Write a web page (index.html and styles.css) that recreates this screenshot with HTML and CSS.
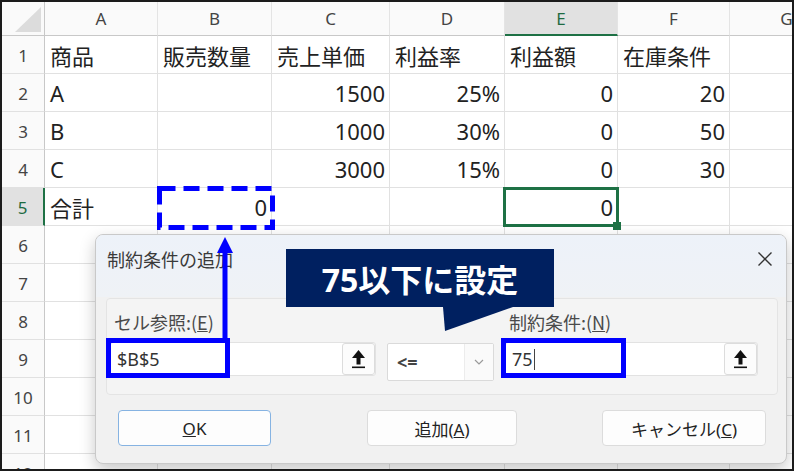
FILE: index.html
```html
<!DOCTYPE html>
<html lang="ja">
<head>
<meta charset="UTF-8">
<meta name="viewport" content="width=device-width, initial-scale=1.0">
<title>制約条件の追加</title>
<link rel="stylesheet" href="styles.css">
</head>
<body>
<div class="screen">

  <!-- worksheet -->
  <div class="sheet">
    <div class="row hd">
      <div class="corner"></div>
      <div class="col-hd">A</div>
      <div class="col-hd">B</div>
      <div class="col-hd">C</div>
      <div class="col-hd">D</div>
      <div class="col-hd on">E</div>
      <div class="col-hd">F</div>
      <div class="col-hd">G</div>
    </div>
    <div class="row">
      <div class="row-hd">1</div>
      <div class="cell">商品</div>
      <div class="cell">販売数量</div>
      <div class="cell">売上単価</div>
      <div class="cell">利益率</div>
      <div class="cell">利益額</div>
      <div class="cell">在庫条件</div>
      <div class="cell"></div>
    </div>
    <div class="row">
      <div class="row-hd">2</div>
      <div class="cell">A</div>
      <div class="cell"></div>
      <div class="cell num">1500</div>
      <div class="cell num">25%</div>
      <div class="cell num">0</div>
      <div class="cell num">20</div>
      <div class="cell"></div>
    </div>
    <div class="row">
      <div class="row-hd">3</div>
      <div class="cell">B</div>
      <div class="cell"></div>
      <div class="cell num">1000</div>
      <div class="cell num">30%</div>
      <div class="cell num">0</div>
      <div class="cell num">50</div>
      <div class="cell"></div>
    </div>
    <div class="row">
      <div class="row-hd">4</div>
      <div class="cell">C</div>
      <div class="cell"></div>
      <div class="cell num">3000</div>
      <div class="cell num">15%</div>
      <div class="cell num">0</div>
      <div class="cell num">30</div>
      <div class="cell"></div>
    </div>
    <div class="row">
      <div class="row-hd on">5</div>
      <div class="cell">合計</div>
      <div class="cell num">0</div>
      <div class="cell"></div>
      <div class="cell"></div>
      <div class="cell num active">0</div>
      <div class="cell"></div>
      <div class="cell"></div>
    </div>
    <div class="row">
      <div class="row-hd">6</div>
      <div class="cell"></div><div class="cell"></div><div class="cell"></div><div class="cell"></div>
      <div class="cell"></div><div class="cell"></div><div class="cell"></div>
    </div>
    <div class="row">
      <div class="row-hd">7</div>
      <div class="cell"></div><div class="cell"></div><div class="cell"></div><div class="cell"></div>
      <div class="cell"></div><div class="cell"></div><div class="cell"></div>
    </div>
    <div class="row">
      <div class="row-hd">8</div>
      <div class="cell"></div><div class="cell"></div><div class="cell"></div><div class="cell"></div>
      <div class="cell"></div><div class="cell"></div><div class="cell"></div>
    </div>
    <div class="row">
      <div class="row-hd">9</div>
      <div class="cell"></div><div class="cell"></div><div class="cell"></div><div class="cell"></div>
      <div class="cell"></div><div class="cell"></div><div class="cell"></div>
    </div>
    <div class="row">
      <div class="row-hd">10</div>
      <div class="cell"></div><div class="cell"></div><div class="cell"></div><div class="cell"></div>
      <div class="cell"></div><div class="cell"></div><div class="cell"></div>
    </div>
    <div class="row">
      <div class="row-hd">11</div>
      <div class="cell"></div><div class="cell"></div><div class="cell"></div><div class="cell"></div>
      <div class="cell"></div><div class="cell"></div><div class="cell"></div>
    </div>
    <div class="row">
      <div class="row-hd">12</div>
      <div class="cell"></div><div class="cell"></div><div class="cell"></div><div class="cell"></div>
      <div class="cell"></div><div class="cell"></div><div class="cell"></div>
    </div>
  </div>

  <!-- solver dialog -->
  <div class="dialog">
    <div class="dlg-title">
      <span>制約条件の追加</span>
      <svg class="close" width="16" height="16" viewBox="0 0 16 16">
        <path d="M1.5 1.5 L14.5 14.5 M14.5 1.5 L1.5 14.5" stroke="#333" stroke-width="1.4" fill="none"/>
      </svg>
    </div>
    <div class="dlg-body">
      <div class="group">
        <div class="label">セル参照:(<u>E</u>)</div>
        <div></div>
        <div class="label">制約条件:(<u>N</u>)</div>

        <div class="field">
          <span class="val">$B$5</span>
          <span class="pick">
            <svg width="15" height="20" viewBox="0 0 15 20">
              <polygon points="7.5,1 14,9 1,9" fill="#111"/>
              <rect x="5.5" y="8" width="4" height="7.5" fill="#111"/>
              <rect x="1" y="17.5" width="13" height="1.6" fill="#111"/>
            </svg>
          </span>
        </div>
        <div class="combo">
          <span class="val">&lt;=</span>
          <span class="drop">
            <svg width="10" height="6" viewBox="0 0 10 6">
              <path d="M1 1 L5 5 L9 1" stroke="#9a9a9a" stroke-width="1.2" fill="none"/>
            </svg>
          </span>
        </div>
        <div class="field">
          <span class="val">75<i class="caret"></i></span>
          <span class="pick">
            <svg width="15" height="20" viewBox="0 0 15 20">
              <polygon points="7.5,1 14,9 1,9" fill="#111"/>
              <rect x="5.5" y="8" width="4" height="7.5" fill="#111"/>
              <rect x="1" y="17.5" width="13" height="1.6" fill="#111"/>
            </svg>
          </span>
        </div>
      </div>

      <div class="buttons">
        <button class="btn default"><u>O</u>K</button>
        <button class="btn add">追加(<u>A</u>)</button>
        <button class="btn cancel">キャンセル(<u>C</u>)</button>
      </div>
    </div>
  </div>

  <!-- annotation -->
  <div class="callout">75以下に設定</div>

  <svg class="marks" width="794" height="471" viewBox="0 0 794 471">
    <rect x="159.5" y="188.5" width="113" height="39" fill="none" stroke="#0000ff" stroke-width="5" stroke-dasharray="16 8"/>
    <line x1="225" y1="250" x2="225" y2="338" stroke="#0000ff" stroke-width="5"/>
    <polygon points="225,237 233,253 217,253" fill="#0000ff"/>
    <rect x="108.5" y="340.5" width="119" height="35" fill="none" stroke="#0000ff" stroke-width="5"/>
    <rect x="503.5" y="340.5" width="120" height="35" fill="none" stroke="#0000ff" stroke-width="5"/>
  </svg>

</div>
</body>
</html>
```

FILE: styles.css
```css
body {
  margin: 0;
  font-family: "Noto Sans", "Noto Sans CJK JP", sans-serif;
  background: #fff;
}

.screen {
  position: relative;
  width: 794px;
  height: 471px;
  box-sizing: border-box;
  border: 2px solid #1b1b1b;
  overflow: hidden;
  background: #fff;
}

/* worksheet grid */
.row {
  display: grid;
  grid-template-columns: 43px 113px 114px 118px 115px 113px 112px 114px;
  height: 38px;
}

.row.hd {
  height: 34px;
}

.row > div {
  box-sizing: border-box;
  border-right: 1px solid #e1e1e1;
  border-bottom: 1px solid #e1e1e1;
}

.corner {
  position: relative;
  background: #fafafa;
  border-right-color: #c8c8c8 !important;
  border-bottom-color: #c8c8c8 !important;
}

.corner::after {
  content: "";
  position: absolute;
  right: 3px;
  bottom: 3px;
  width: 26px;
  height: 25px;
  background: #dcdcdc;
  clip-path: polygon(100% 0, 100% 100%, 0 100%);
}

.col-hd {
  display: flex;
  align-items: center;
  justify-content: center;
  font-size: 17px;
  color: #444;
  background: #fafafa;
  border-right-color: #e4e4e4 !important;
  border-bottom-color: #c8c8c8 !important;
}

.col-hd.on {
  background: #e1e1e1;
  color: #1e6b41;
  border-bottom: 2px solid #1e7145 !important;
}

.row-hd {
  display: flex;
  align-items: center;
  justify-content: center;
  padding-top: 2px;
  font-size: 17px;
  color: #444;
  background: #fafafa;
  border-right-color: #c8c8c8 !important;
}

.row-hd.on {
  background: #e1e1e1;
  color: #1e6b41;
  border-right: 2px solid #1e7145 !important;
}

.cell {
  display: flex;
  align-items: center;
  padding: 0 4px 0 5px;
  font-size: 22px;
  color: #222;
  white-space: nowrap;
}

.cell.num {
  justify-content: flex-end;
}

.cell.active {
  position: relative;
}

.cell.active::after {
  content: "";
  position: absolute;
  left: -2px;
  top: -1px;
  right: -2px;
  bottom: -2px;
  border: 3px solid #1e7145;
}

.cell.active::before {
  content: "";
  position: absolute;
  right: -4px;
  bottom: -5px;
  width: 8px;
  height: 8px;
  background: #1e7145;
  z-index: 1;
}

/* dialog */
.dialog {
  position: absolute;
  left: 93px;
  top: 232px;
  width: 692px;
  height: 230px;
  box-sizing: border-box;
  border: 1px solid #c9c9c9;
  border-radius: 8px;
  background: #f1f1f1;
  box-shadow: 0 6px 16px rgba(0, 0, 0, 0.22);
  overflow: hidden;
  font-family: "Noto Sans CJK JP", sans-serif;
  color: #333;
}

.dlg-title {
  height: 62px;
  box-sizing: border-box;
  display: flex;
  justify-content: space-between;
  align-items: flex-start;
  padding: 12px 13px 0 11px;
  background: linear-gradient(#edf2f9, #eff2f6);
  font-size: 18px;
  line-height: 24px;
  color: #3a3a3a;
}

.close {
  margin-top: 4px;
}

.dlg-body {
  padding: 1px 8px 0 10px;
}

.group {
  display: grid;
  grid-template-columns: 266px 107px 253px;
  column-gap: 11px;
  row-gap: 8px;
  align-items: start;
  padding: 11px 19px 13px 3px;
  border: 1px solid #e4e4e4;
  border-radius: 4px;
  background: #f4f4f4;
}

.label {
  padding-left: 4px;
  font-size: 18px;
  line-height: 24px;
  color: #4a4a4a;
}

.field {
  display: flex;
  height: 34px;
  box-sizing: border-box;
  background: #fff;
  border: 1px solid #e2e2e2;
  border-radius: 3px;
}

.val {
  flex: 1;
  display: flex;
  align-items: center;
  padding-left: 6px;
  font-family: "Noto Sans", "Noto Sans CJK JP", sans-serif;
  font-size: 18px;
  color: #333;
}

.caret {
  display: inline-block;
  width: 1px;
  height: 21px;
  margin-left: 1px;
  background: #444;
}

.pick {
  width: 33px;
  display: flex;
  align-items: center;
  justify-content: center;
  box-sizing: border-box;
  background: #fcfcfc;
  border: 1px solid #dcdcdc;
  border-radius: 3px;
}

.combo {
  display: flex;
  height: 38px;
  margin-top: 1px;
  box-sizing: border-box;
  background: #fff;
  border: 1px solid #dadada;
  border-radius: 2px;
}

.combo .val {
  padding-left: 9px;
  font-weight: bold;
  color: #444;
}

.drop {
  width: 28px;
  display: flex;
  align-items: center;
  justify-content: center;
  border-left: 1px solid #ececec;
  background: #fafafa;
}

.buttons {
  display: flex;
  padding: 15px 0 0 12px;
}

.btn {
  height: 36px;
  box-sizing: border-box;
  background: #fdfdfd;
  border: 1px solid #dcdcdc;
  border-radius: 4px;
  font-family: "Noto Sans", "Noto Sans CJK JP", sans-serif;
  font-size: 17px;
  color: #222;
  padding: 0;
}

.btn.default {
  width: 153px;
  border-color: #86b3e2;
}

.btn.add {
  width: 150px;
  margin-left: 96px;
}

.btn.cancel {
  width: 164px;
  margin-left: 85px;
}

/* annotations */
.callout {
  position: absolute;
  left: 284px;
  top: 247px;
  width: 268px;
  height: 58px;
  display: flex;
  align-items: center;
  justify-content: center;
  background: #002060;
  color: #fff;
  font-family: "Noto Sans", "Noto Sans CJK JP", sans-serif;
  font-size: 32px;
  font-weight: bold;
}

.callout::after {
  content: "";
  position: absolute;
  left: 157px;
  top: 58px;
  width: 70px;
  height: 24px;
  background: #002060;
  clip-path: polygon(0 0, 100% 0, 2px 100%);
}

.marks {
  position: absolute;
  left: -2px;
  top: -2px;
  pointer-events: none;
}
```
